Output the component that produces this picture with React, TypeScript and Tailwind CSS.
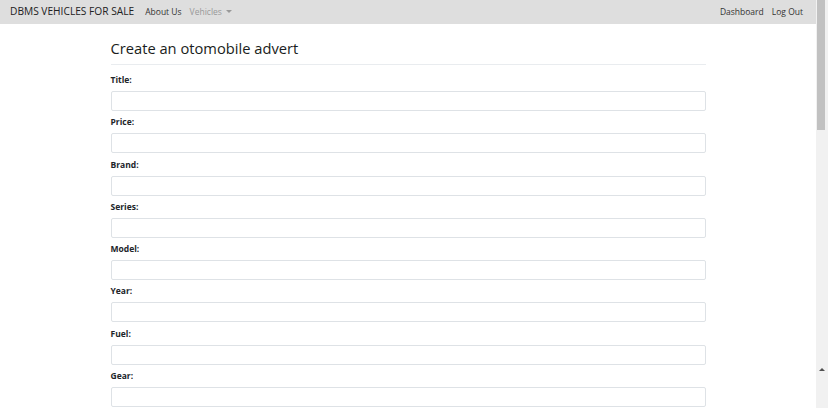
const FIELDS = ["Title", "Price", "Brand", "Series", "Model", "Year", "Fuel", "Gear"];

function Navbar() {
  return (
    <nav className="flex h-[24px] shrink-0 items-center justify-between bg-[#dedede] pl-[10px] pr-[13px]">
      <div className="flex items-center">
        <span className="text-[10.2px] text-[#222]">DBMS VEHICLES FOR SALE</span>
        <a className="ml-[11px] text-[8.5px] text-[#333]">About Us</a>
        <a className="ml-[8px] flex items-center text-[8.5px] text-[#999]">
          Vehicles
          <span className="ml-[4px] inline-block h-0 w-0 border-x-[3px] border-t-[3px] border-x-transparent border-t-[#999]" />
        </a>
      </div>
      <div className="flex items-center gap-[8px] text-[8.5px] text-[#333]">
        <a>Dashboard</a>
        <a>Log Out</a>
      </div>
    </nav>
  );
}

function Scrollbar() {
  return (
    <div className="relative w-[12px] shrink-0 bg-[#f1f1f1]">
      <div className="ml-[1px] h-[130px] w-[8px] bg-[#c1c1c1]" />
      <span className="absolute left-[3px] top-[368px] h-0 w-0 border-x-[3px] border-b-[3px] border-x-transparent border-b-[#505050]" />
    </div>
  );
}

export default function App() {
  return (
    <div className="flex h-[408px] w-[828px] overflow-hidden bg-white" style={{ fontFamily: '"Open Sans", "Noto Sans", sans-serif' }}>
      <div className="flex flex-1 flex-col">
        <Navbar />
        <div className="mx-auto w-[595px]">
          <h1 className="mt-[12px] border-b border-[#e9ecef] pb-[4px] text-[14.7px] leading-[24px] font-medium text-[#1a1d20]">
            Create an otomobile advert
          </h1>
          <form className="pt-[8px]">
            {FIELDS.map((f) => (
              <div key={f} className="pb-[4.3px]">
                <label className="block text-[8.5px] leading-[14px] font-bold text-[#212529]">{f}:</label>
                <input className="mt-[4px] block h-[20px] w-full rounded-[2px] border border-[#dee2e6] bg-white" />
              </div>
            ))}
          </form>
        </div>
      </div>
      <Scrollbar />
    </div>
  );
}
